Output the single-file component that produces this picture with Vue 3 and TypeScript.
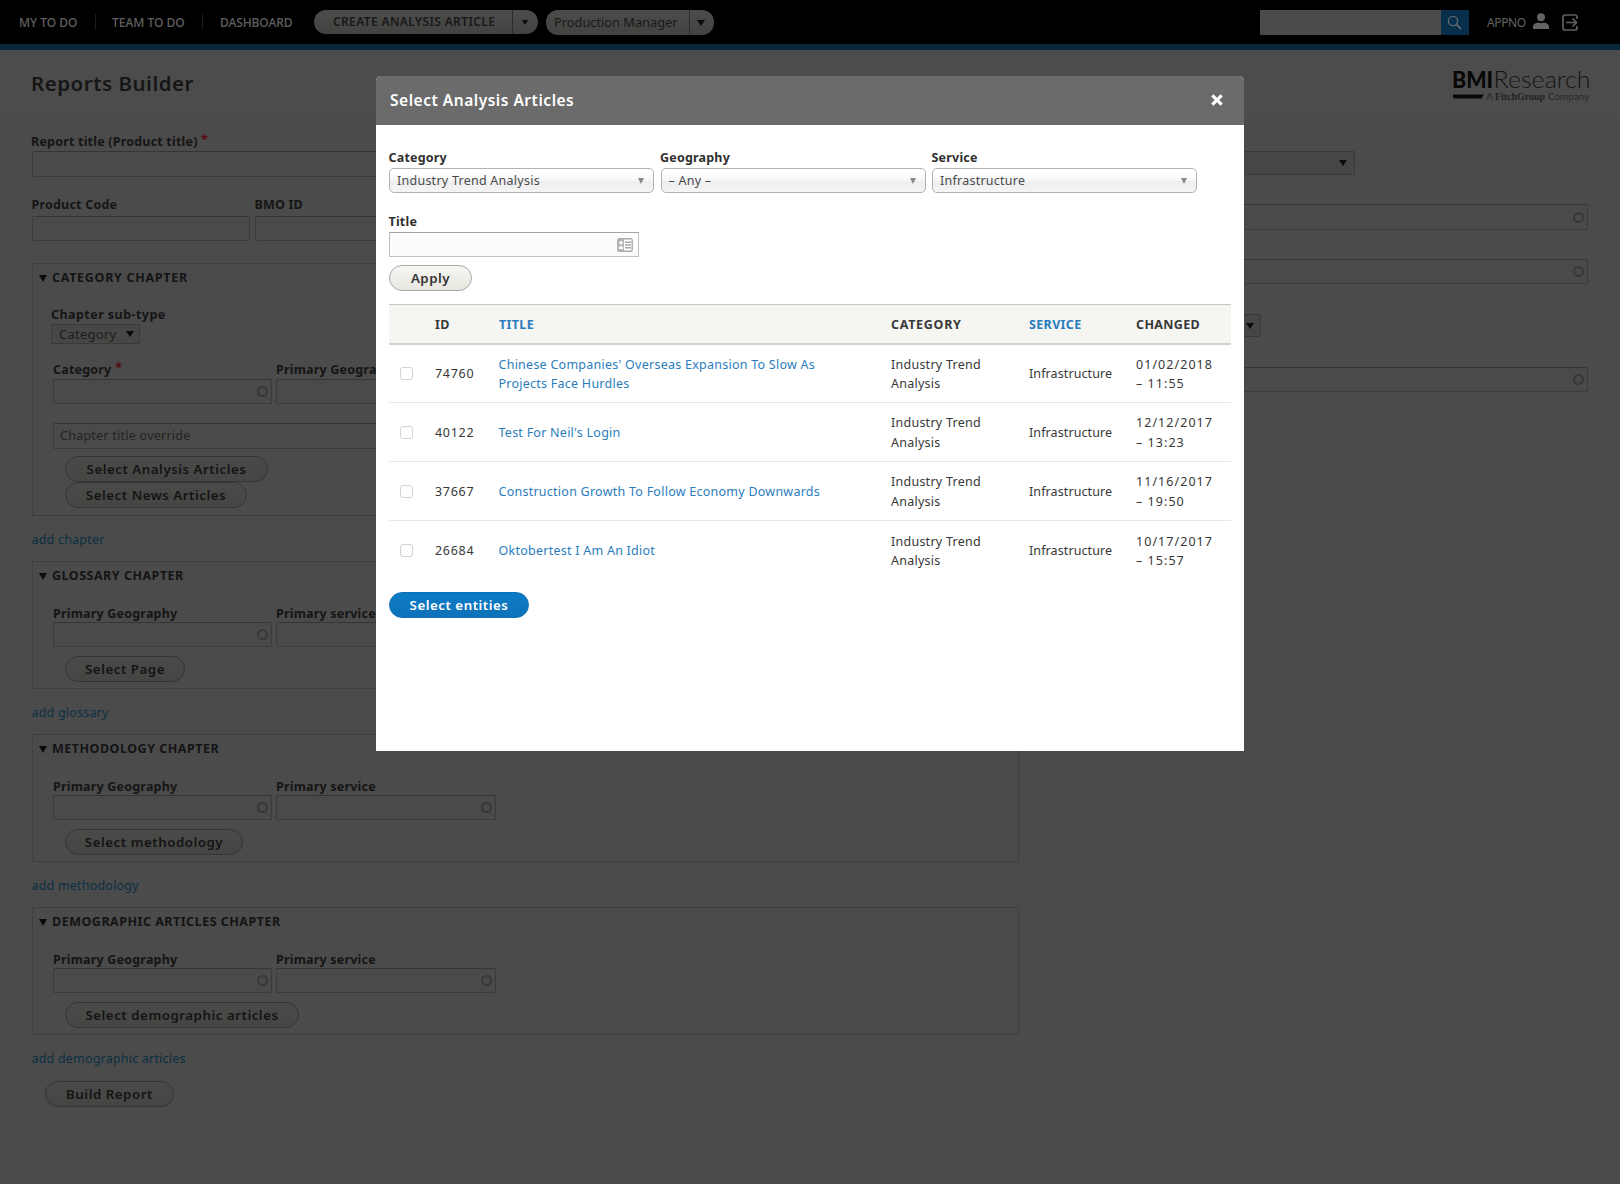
<script setup lang="ts">
interface Article {
  id: string
  title: string
  date: string
  time: string
}

const articles: Article[] = [
  { id: '74760', title: "Chinese Companies' Overseas Expansion To Slow As Projects Face Hurdles", date: '01/02/2018', time: '– 11:55' },
  { id: '40122', title: "Test For Neil's Login", date: '12/12/2017', time: '– 13:23' },
  { id: '37667', title: 'Construction Growth To Follow Economy Downwards', date: '11/16/2017', time: '– 19:50' },
  { id: '26684', title: 'Oktobertest I Am An Idiot', date: '10/17/2017', time: '– 15:57' },
]

const chapters = [
  { legend: 'GLOSSARY CHAPTER', button: 'Select Page', width: 120, add: 'add glossary' },
  { legend: 'METHODOLOGY CHAPTER', button: 'Select methodology', width: 178, add: 'add methodology' },
  { legend: 'DEMOGRAPHIC ARTICLES CHAPTER', button: 'Select demographic articles', width: 234, add: 'add demographic articles' },
]

const filters = [
  { label: 'Category', value: 'Industry Trend Analysis' },
  { label: 'Geography', value: '– Any –' },
  { label: 'Service', value: 'Infrastructure' },
]
</script>

<template>
  <div class="page">
    <header class="topbar">
      <nav class="nav">
        <a class="n1">MY TO DO</a><i class="sep"></i>
        <a class="n2">TEAM TO DO</a><i class="sep"></i>
        <a class="n3">DASHBOARD</a>
      </nav>
      <div class="pill create"><b>CREATE ANALYSIS ARTICLE</b><span><i class="tri small"></i></span></div>
      <div class="pill manager"><em>Production Manager</em><span><i class="tri"></i></span></div>
      <div class="search">
        <div class="search-field"></div>
        <div class="search-btn">
          <svg width="16" height="16" viewBox="0 0 16 16" fill="none" stroke="#5d6870"><circle cx="6" cy="6" r="4.6" stroke-width="1.4" /><path d="M9.400 9.400L14 14" stroke-width="1.800" /></svg>
        </div>
      </div>
      <span class="user">APPNO</span>
      <svg class="person" width="16" height="17" viewBox="0 0 16 17" fill="#646464"><circle cx="8" cy="4.2" r="4" /><path d="M0 16v-2.200C0 11 3 9.900 5.400 9.500Q8 11 10.600 9.500C13 9.900 16 11 16 13.800V16z" /></svg>
      <svg class="logout" width="17" height="17" viewBox="0 0 17 17" fill="none" stroke="#606060" stroke-width="1.7"><path d="M15 5V3Q15 1 13 1H3Q1 1 1 3v11q0 2 2 2h10q2 0 2-2v-2" /><path d="M4 8.500h11M10.500 4.500l4 4-4 4" /></svg>
    </header>

    <div class="heading">
      <h1>Reports Builder</h1>
      <svg class="logo" width="138" height="32" viewBox="0 0 138 32">
        <text x="-1" y="17.500" class="lg-bold" textLength="41" lengthAdjust="spacingAndGlyphs">BMI</text>
        <text x="40.500" y="17.500" class="lg-light" textLength="97" lengthAdjust="spacingAndGlyphs">Research</text>
        <path d="M0 24.500h30.500l-1.500 4H2q-2 0-2-2z" fill="#080808" />
        <text x="33" y="29.500" class="lg-tag" textLength="7" lengthAdjust="spacingAndGlyphs">A</text>
        <text x="42" y="29.500" class="lg-serif" textLength="50" lengthAdjust="spacingAndGlyphs">FitchGroup</text>
        <text x="95" y="29.500" class="lg-tag" textLength="41" lengthAdjust="spacingAndGlyphs">Company</text>
      </svg>
    </div>

    <div class="columns">
      <main class="left">
        <label class="lbl first">Report title (Product title) <sup>*</sup></label>
        <div class="inp tall"></div>
        <div class="pair top">
          <div><label class="lbl">Product Code</label><div class="inp"></div></div>
          <div><label class="lbl">BMO ID</label><div class="inp"></div></div>
        </div>

        <section class="set category">
          <h2><i class="tri"></i>CATEGORY CHAPTER</h2>
          <label class="lbl sub">Chapter sub-type</label>
          <div class="mini">Category<i class="tri"></i></div>
          <div class="pair inner cat">
            <div><label class="lbl">Category <sup>*</sup></label><div class="inp auto"><i></i></div></div>
            <div><label class="lbl">Primary Geography</label><div class="inp auto"><i></i></div></div>
          </div>
          <div class="inp override">Chapter title override</div>
          <div class="btn dim b1">Select Analysis Articles</div>
          <div class="btn dim b2">Select News Articles</div>
        </section>
        <a class="add">add chapter</a>

        <template v-for="c in chapters" :key="c.legend">
          <section class="set">
            <h2><i class="tri"></i>{{ c.legend }}</h2>
            <div class="pair inner">
              <div><label class="lbl">Primary Geography</label><div class="inp auto"><i></i></div></div>
              <div><label class="lbl">Primary service</label><div class="inp auto"><i></i></div></div>
            </div>
            <div class="btn dim" :style="{ width: c.width + 'px' }">{{ c.button }}</div>
          </section>
          <a class="add">{{ c.add }}</a>
        </template>
        <div class="btn dim build">Build Report</div>
      </main>

      <aside class="right">
        <div class="sel wide"><i class="tri"></i></div>
        <div class="inp auto r1"><i></i></div>
        <div class="inp auto r2"><i></i></div>
        <div class="sel narrow"><i class="tri"></i></div>
        <div class="inp auto r3"><i></i></div>
      </aside>
    </div>

    <div class="modal">
      <div class="modal-head">
        <span>Select Analysis Articles</span>
        <svg width="12" height="12" viewBox="0 0 12 12" stroke="#fff" stroke-width="3.200"><path d="M1.300 1.300l9.400 9.400M10.700 1.300L1.300 10.700" /></svg>
      </div>
      <div class="modal-body">
        <div class="filters">
          <div v-for="f in filters" :key="f.label">
            <label class="mlbl">{{ f.label }}</label>
            <div class="chosen">{{ f.value }}<i class="tri"></i></div>
          </div>
        </div>
        <label class="mlbl title-lbl">Title</label>
        <div class="title-inp">
          <svg width="16" height="14" viewBox="0 0 16 14"><rect x=".8" y=".8" width="14.400" height="12.400" rx="1.500" fill="#fff" stroke="#aaa" stroke-width="1.400" /><rect x="1" y="1" width="6" height="12" fill="#b4b4b4" /><circle cx="4" cy="4.800" r="1.700" fill="#fff" /><path d="M1.800 11V9.500Q4 6 6.200 9.500V11z" fill="#fff" /><path d="M8 4.200h6M8 7h6M8 9.800h6" stroke="#aaa" stroke-width="1.400" /></svg>
        </div>
        <div class="btn apply">Apply</div>
        <div class="table">
          <div class="row th"><span></span><span>ID</span><span class="lk">TITLE</span><span class="cat-head">CATEGORY</span><span class="lk">SERVICE</span><span>CHANGED</span></div>
          <div v-for="a in articles" :key="a.id" class="row">
            <span><i class="check"></i></span>
            <span class="num">{{ a.id }}</span>
            <span class="lk ttl">{{ a.title }}</span>
            <span>Industry Trend<br />Analysis</span>
            <span class="service">Infrastructure</span>
            <span class="num date">{{ a.date }}<br />{{ a.time }}</span>
          </div>
        </div>
        <div class="btn primary">Select entities</div>
      </div>
    </div>
  </div>
</template>

<style>
body { margin: 0; background: #4b4b4b; }
</style>

<style scoped>
* { box-sizing: border-box; }
.page { position: relative; width: 1620px; height: 1184px; overflow: hidden; background: #4b4b4b; color: #151515; font: 12.5px/19px "Noto Sans", "Open Sans", sans-serif; letter-spacing: .25px; }
.tri { display: block; width: 0; height: 0; border: 4px solid transparent; border-top: 6px solid #0b0b0b; border-bottom: 0; }

.topbar { display: flex; height: 50px; padding-top: 10px; background: #000; border-bottom: 6px solid #08273a; }
.nav { display: flex; width: 314px; height: 24px; padding-left: 19px; color: #606060; font-size: 12px; line-height: 25px; letter-spacing: 0; font-weight: 500; }
.nav a { white-space: nowrap; }
.n1 { width: 76px; } .n2 { width: 90px; } .n3 { width: 90px; letter-spacing: -.1px; }
.nav .sep { width: 1px; height: 16px; margin: 4px 17px 0 0; background: #1b1b1b; }
.nav .n1 + .sep { margin-right: 16px; }
.pill { display: flex; height: 24px; border-radius: 12px; background: linear-gradient(#4c4c4b, #424240); white-space: nowrap; }
.pill span { display: flex; height: 24px; border-left: 1px solid #2c2c2c; justify-content: center; align-items: center; }
.create { width: 224px; margin-right: 8px; }
.create b { width: 198px; padding-left: 19px; color: #181818; font-size: 12px; font-weight: 600; line-height: 23px; letter-spacing: .37px; }
.create span { width: 24px; }
.tri.small { border-width: 5px 3px 0; }
.manager { width: 168px; height: 25px; }
.manager em { width: 143px; padding-left: 8px; color: #191919; font-style: normal; font-size: 12.8px; line-height: 25px; letter-spacing: 0; }
.manager span { width: 22px; height: 25px; }
.search { display: flex; width: 209px; height: 25px; margin-left: 546px; }
.search-field { width: 181px; background: #4b4b4b; }
.search-btn { display: flex; width: 28px; align-items: center; justify-content: center; background: #072e4a; }
.user { width: 46px; margin-left: 18px; color: #646464; font-size: 12px; line-height: 25px; letter-spacing: -.4px; }
.person { margin-top: 3px; }
.logout { margin: 4px 0 0 13px; }

.heading { display: flex; justify-content: space-between; height: 66px; padding: 0 32px; background: #4c4c4c; }
h1 { margin: 19px 0 0 -1px; color: #161616; font-size: 20.500px; line-height: 29px; font-weight: 600; letter-spacing: .52px; }
.logo { margin: 20px -3px 0 0; overflow: visible; }
.lg-bold { font: 900 22px Lato, sans-serif; fill: #080808; letter-spacing: 0; }
.lg-light { font: 300 23px Lato, sans-serif; fill: #141414; letter-spacing: 0; }
.lg-tag { font: 9px Lato, sans-serif; fill: #282828; letter-spacing: 0; }
.lg-serif { font: 700 10px "Liberation Serif", serif; fill: #222; letter-spacing: 0; }

.columns { display: flex; padding: 15px 32px 0; }
.left { width: 987px; }
.lbl { display: block; height: 20px; line-height: 20px; color: #151515; font-weight: 700; white-space: nowrap; letter-spacing: .2px; }
.lbl.first { margin-left: -1px; line-height: 21px; }
.pair.top .lbl { margin-left: -.5px; }
.lbl sup { position: relative; top: 0; color: #560d14; font-size: 13px; line-height: 0; vertical-align: 2px; }
.inp { height: 25px; border: 1px solid #3b3b3b; border-top-color: #353535; background: #4a4a48; border-radius: 2px; }
.inp.tall { height: 26px; }
.pair { display: flex; gap: 5px; }
.pair > div { width: 218px; }
.pair.top { padding-top: 18px; }
.pair.top .lbl { height: 21px; }
.pair.inner { padding-left: 20px; gap: 4px; }
.pair.inner > div { width: 219px; }
.pair.inner > div + div { width: 220px; }
.auto { display: flex; justify-content: flex-end; align-items: center; padding-right: 3px; }
.auto i { width: 11px; height: 11px; border: 2px solid #383838; border-radius: 50%; }
.set { height: 128px; margin-top: 18px; border: 1px solid #404040; }
.category { height: 253px; margin-top: 22px; }
h2 { display: flex; align-items: center; height: 20px; margin: 4px 0 18px 6px; font-size: 12.5px; line-height: 20px; font-weight: 700; letter-spacing: .5px; color: #141414; }
h2 .tri { margin: 0 5px 0 0; border-width: 7px 4px 0; }
.category h2 { margin-bottom: 17px; letter-spacing: .7px; }
.lbl.sub { height: 19px; margin-left: 18px; letter-spacing: .45px; }
.mini { display: flex; justify-content: space-between; align-items: center; width: 89px; height: 20px; margin: 0 0 16px 18px; padding: 0 5px 0 7px; border: 1px solid #3a3a3a; background: #474745; color: #1c1c1c; font-size: 13px; }
.pair.cat { height: 44px; }
.set .pair .lbl { height: 18px; }
.set .pair.cat .lbl { height: 19px; }
.override { width: 900px; height: 26px; margin: 19px 0 7px 20px; padding-left: 6px; line-height: 23px; color: #252525; }
.btn { display: flex; align-items: center; justify-content: center; height: 26px; padding-top: 1px; border: 1px solid #a9a9a9; border-radius: 13px; font-size: 13.300px; font-weight: 600; white-space: nowrap; letter-spacing: .52px; color: #333; background: linear-gradient(#f6f6f3, #e7e7df); }
.btn.dim { color: #141414; border-color: #353535; background: linear-gradient(#4a4a49, #454543); margin-left: 32px; }
.set > .btn { margin-top: 9px; }
.set > .b1 { width: 203px; margin-top: 0; }
.set > .b2 { width: 182px; margin-top: 0; }
.add { display: block; height: 27px; margin-left: -.5px; padding-top: 14px; line-height: 20px; color: #0c2f43; letter-spacing: .2px; }
.btn.build { width: 129px; margin: 19px 0 0 13px; }
.right { flex: 1; padding: 20px 0 0 14px; }
.sel { display: flex; height: 24px; align-items: center; justify-content: flex-end; padding-right: 7px; border: 1px solid #393939; border-radius: 2px; background: #464644; }
.wide { width: 322px; }
.narrow { width: 228px; height: 23px; margin-top: 30px; padding-right: 6px; }
.r1 { height: 26px; margin-top: 29px; }
.r2 { margin-top: 29px; }
.r3 { margin-top: 30px; }

.modal { position: absolute; left: 376px; top: 76px; width: 868px; height: 675px; background: #fff; border-radius: 5px 5px 0 0; }
.modal-head { display: flex; align-items: flex-start; justify-content: space-between; height: 49px; padding: 13px 21px 0 14px; border-radius: 5px 5px 0 0; background: #6b6b6b; color: #fff; font-size: 15.500px; line-height: 22px; font-weight: 600; letter-spacing: .52px; }
.modal-head svg { margin-top: 5px; }
.modal-body { padding: 23px 13px 0; color: #383838; }
.mlbl { display: block; height: 20px; line-height: 20px; font-weight: 700; letter-spacing: .2px; color: #303030; margin-left: -.5px; }
.filters { display: flex; gap: 6.500px; }
.filters > div { width: 265px; }
.chosen { display: flex; justify-content: space-between; align-items: center; height: 25px; padding: 0 9px 0 7px; border: 1px solid #b2b2b2; border-radius: 5px; background: linear-gradient(#fff 20%, #f6f6f6 50%, #eee 52%, #f4f4f4); color: #4a4a4a; }
.chosen .tri { border-width: 6px 3px 0; border-top-color: #888; }
.title-lbl { margin-top: 18px; height: 21px; line-height: 21px; }
.title-inp { display: flex; justify-content: flex-end; align-items: center; width: 250px; height: 25px; padding-right: 5px; border: 1px solid #c0c0be; border-top-color: #a5a5a3; background: #fcfcfa; }
.apply { width: 83px; margin-top: 8px; }
.table { margin-top: 13px; }
.row { display: grid; grid-template-columns: 46px 64px 392px 138px 107px 95px; align-items: center; height: 58.850px; padding-top: 1px; border-bottom: 1px solid #e9e8e5; line-height: 19.400px; }
.row:last-child { border-bottom: 0; }
.th { height: 40.500px; border-top: 1px solid #c6c6c2; border-bottom: 2px solid #d2d2d0; background: #f5f5f2; font-weight: 700; letter-spacing: .35px; }
.cat-head { letter-spacing: .7px; }
.lk { color: #2a7cbd; }
.ttl { width: 340px; margin-left: -.5px; }
.service { letter-spacing: .1px; }
.num { letter-spacing: .7px; }
.date { letter-spacing: 1.050px; }
.check { display: block; width: 13px; height: 13px; margin-left: 11px; border: 1px solid #d4d4d4; border-radius: 3px; background: #fff; }
.primary { width: 140px; margin-top: 12px; border-color: #1070b4; background: linear-gradient(#0b7bc6, #0d72b9); color: #fff; }
</style>
